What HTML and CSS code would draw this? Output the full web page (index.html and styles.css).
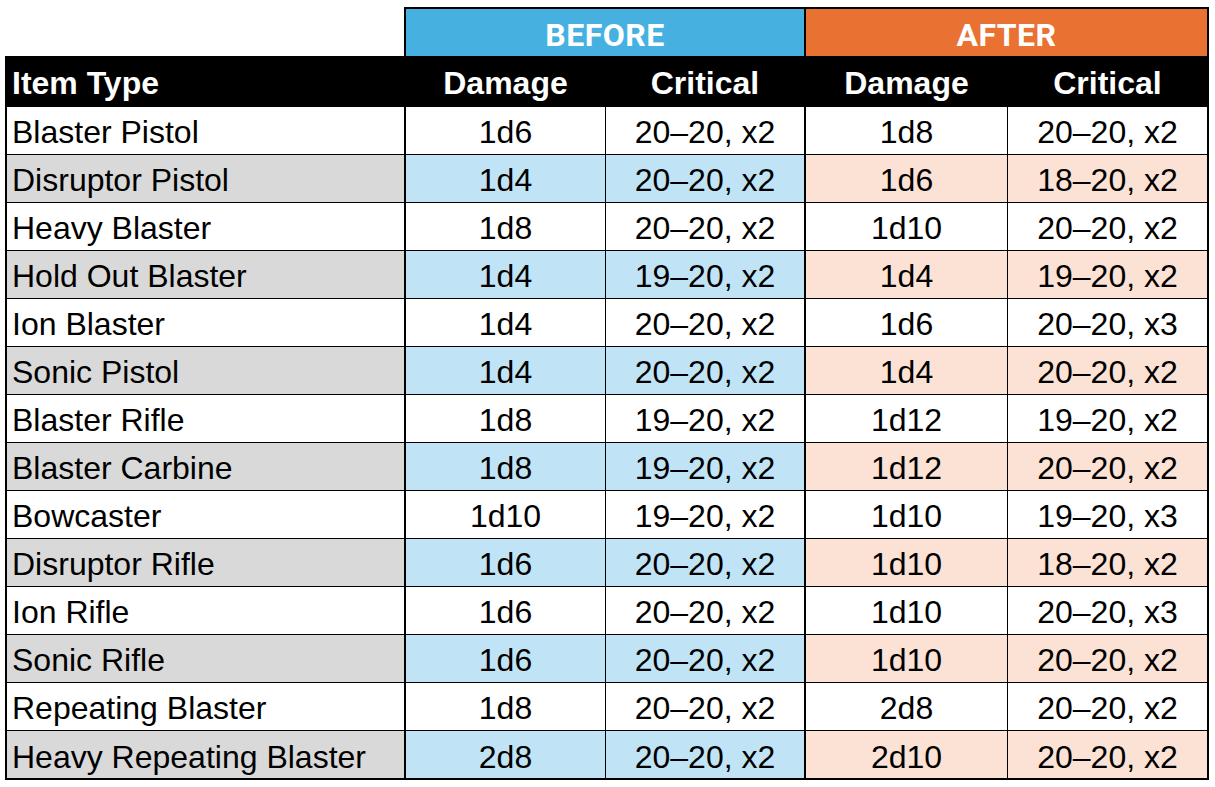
FILE: index.html
```html
<!DOCTYPE html>
<html>
<head>
<meta charset="utf-8">
<link rel="stylesheet" href="styles.css">
</head>
<body>
<div class="sheet">
  <div class="cell blank"></div>
  <div class="cell group before">BEFORE</div>
  <div class="cell group after">AFTER</div>

  <div class="cell head name c1">Item Type</div>
  <div class="cell head c2">Damage</div>
  <div class="cell head c3">Critical</div>
  <div class="cell head c4">Damage</div>
  <div class="cell head c5">Critical</div>

  <div class="cell name c1">Blaster Pistol</div><div class="cell num c2">1d6</div><div class="cell num c3">20–20, x2</div><div class="cell num c4">1d8</div><div class="cell num c5">20–20, x2</div>
  <div class="cell name c1 shade">Disruptor Pistol</div><div class="cell num c2 shade">1d4</div><div class="cell num c3 shade">20–20, x2</div><div class="cell num c4 shade">1d6</div><div class="cell num c5 shade">18–20, x2</div>
  <div class="cell name c1">Heavy Blaster</div><div class="cell num c2">1d8</div><div class="cell num c3">20–20, x2</div><div class="cell num c4">1d10</div><div class="cell num c5">20–20, x2</div>
  <div class="cell name c1 shade">Hold Out Blaster</div><div class="cell num c2 shade">1d4</div><div class="cell num c3 shade">19–20, x2</div><div class="cell num c4 shade">1d4</div><div class="cell num c5 shade">19–20, x2</div>
  <div class="cell name c1">Ion Blaster</div><div class="cell num c2">1d4</div><div class="cell num c3">20–20, x2</div><div class="cell num c4">1d6</div><div class="cell num c5">20–20, x3</div>
  <div class="cell name c1 shade">Sonic Pistol</div><div class="cell num c2 shade">1d4</div><div class="cell num c3 shade">20–20, x2</div><div class="cell num c4 shade">1d4</div><div class="cell num c5 shade">20–20, x2</div>
  <div class="cell name c1">Blaster Rifle</div><div class="cell num c2">1d8</div><div class="cell num c3">19–20, x2</div><div class="cell num c4">1d12</div><div class="cell num c5">19–20, x2</div>
  <div class="cell name c1 shade">Blaster Carbine</div><div class="cell num c2 shade">1d8</div><div class="cell num c3 shade">19–20, x2</div><div class="cell num c4 shade">1d12</div><div class="cell num c5 shade">20–20, x2</div>
  <div class="cell name c1">Bowcaster</div><div class="cell num c2">1d10</div><div class="cell num c3">19–20, x2</div><div class="cell num c4">1d10</div><div class="cell num c5">19–20, x3</div>
  <div class="cell name c1 shade">Disruptor Rifle</div><div class="cell num c2 shade">1d6</div><div class="cell num c3 shade">20–20, x2</div><div class="cell num c4 shade">1d10</div><div class="cell num c5 shade">18–20, x2</div>
  <div class="cell name c1">Ion Rifle</div><div class="cell num c2">1d6</div><div class="cell num c3">20–20, x2</div><div class="cell num c4">1d10</div><div class="cell num c5">20–20, x3</div>
  <div class="cell name c1 shade">Sonic Rifle</div><div class="cell num c2 shade">1d6</div><div class="cell num c3 shade">20–20, x2</div><div class="cell num c4 shade">1d10</div><div class="cell num c5 shade">20–20, x2</div>
  <div class="cell name c1">Repeating Blaster</div><div class="cell num c2">1d8</div><div class="cell num c3">20–20, x2</div><div class="cell num c4">2d8</div><div class="cell num c5">20–20, x2</div>
  <div class="cell name c1 shade last">Heavy Repeating Blaster</div><div class="cell num c2 shade last">2d8</div><div class="cell num c3 shade last">20–20, x2</div><div class="cell num c4 shade last">2d10</div><div class="cell num c5 shade last">20–20, x2</div>
</div>
</body>
</html>
```

FILE: styles.css
```css
html, body {
  margin: 0;
  padding: 0;
  background: #ffffff;
}
body {
  padding: 7px 0 0 5px;
}
.sheet {
  display: grid;
  grid-template-columns: 401px 200px 200px 202px 201px;
  grid-template-rows: 49px 51px repeat(13, 48px) 49px;
  font-family: "Liberation Sans", Arial, sans-serif;
  font-size: 32px;
  line-height: 36px;
  color: #000;
}
.cell {
  box-sizing: border-box;
  display: flex;
  align-items: flex-end;
  justify-content: center;
  border-bottom: 1px solid #000;
  padding-bottom: 4px;
  white-space: nowrap;
}
.blank {
  border-bottom: none;
  border-right: 2px solid #000;
}
.group {
  grid-column: span 2;
  border-top: 2px solid #000;
  border-right: 2px solid #000;
  border-bottom: none;
  color: #fff;
  font-family: Roboto, "Liberation Sans", sans-serif;
  font-weight: bold;
  letter-spacing: 0.5px;
  padding-bottom: 3px;
}
.before { background: #46b1e1; }
.after { background: #e97132; }
.head {
  background: #000;
  color: #fff;
  font-weight: bold;
  border-bottom: none;
  padding-bottom: 6px;
}
.c1 {
  border-left: 2px solid #000;
  border-right: 2px solid #000;
}
.c2, .c4 { border-right: 1px solid #000; }
.c3, .c5 { border-right: 2px solid #000; }
.name {
  justify-content: flex-start;
  padding-left: 5px;
}
.shade.c1 { background: #d9d9d9; }
.shade.c2, .shade.c3 { background: #c0e4f5; }
.shade.c4, .shade.c5 { background: #fbe2d5; }
.last { border-bottom: 2px solid #000; padding-bottom: 3px; }
```
